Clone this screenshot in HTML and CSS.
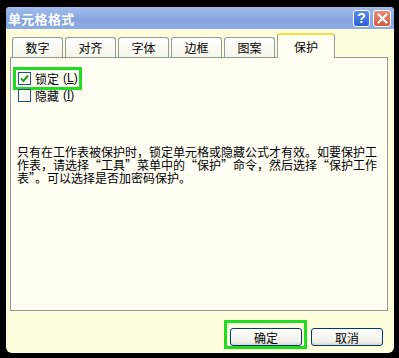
FILE: index.html
```html
<!DOCTYPE html>
<html lang="zh-CN">
<head>
  <meta charset="UTF-8">
  <title>单元格格式</title>
  <link rel="stylesheet" href="styles.css">
</head>
<body>
  <div class="dialog">
    <div class="titlebar">
      <span class="title">单元格格式</span>
      <span class="tb-btn help">?</span>
      <span class="tb-btn close">
        <svg width="11" height="11" viewBox="0 0 11 11"><path d="M1.5 1.5 L9.5 9.5 M9.5 1.5 L1.5 9.5" stroke="#fff" stroke-width="2.2" stroke-linecap="round"/></svg>
      </span>
    </div>
    <div class="content">
      <div class="tabs">
        <span class="tab">数字</span>
        <span class="tab">对齐</span>
        <span class="tab">字体</span>
        <span class="tab">边框</span>
        <span class="tab">图案</span>
        <span class="tab active">保护</span>
      </div>
      <div class="panel">
        <div class="highlight">
          <label class="check"><span class="box checked"><svg width="9" height="9" viewBox="0 0 9 9"><path d="M1 4.5 L3.5 7 L8 1.5" fill="none" stroke="#21a121" stroke-width="2"/></svg></span>锁定 <span class="key">(<u>L</u>)</span></label>
        </div>
        <label class="check plain"><span class="box"></span>隐藏 <span class="key">(<u>I</u>)</span></label>
        <p class="note">只有在工作表被保护时，锁定单元格或隐藏公式才有效。如要保护工作表，请选择“工具”菜单中的“保护”命令，然后选择“保护工作表”。可以选择是否加密码保护。</p>
      </div>
      <div class="buttons">
        <span class="btn-wrap"><button class="btn">确定</button></span>
        <button class="btn">取消</button>
      </div>
    </div>
  </div>
</body>
</html>
```

FILE: styles.css
```css
body {
  margin: 0;
  background: #000;
  font-family: "Noto Sans CJK SC", "Liberation Sans", sans-serif;
  font-size: 12px;
  color: #000;
}
.dialog {
  width: 388px;
  height: 346px;
  margin: 7px 0 0 6px;
  background: #fefedd;
  border-radius: 4px 4px 6px 6px;
  overflow: hidden;
  display: flex;
  flex-direction: column;
}
.titlebar {
  height: 22px;
  background: linear-gradient(#a2bbec, #85a5e0 60%, #8eabe2);
  display: flex;
  align-items: center;
  padding: 0 3px 0 2px;
  gap: 3px;
}
.title {
  flex: 1;
  color: #fff;
  font-weight: bold;
  font-size: 13px;
  letter-spacing: 0.3px;
}
.tb-btn {
  width: 17px;
  height: 17px;
  border: 1px solid #fff;
  border-radius: 3px;
  display: flex;
  align-items: center;
  justify-content: center;
  box-sizing: border-box;
}
.help {
  background: linear-gradient(#5b8be6, #2a5fd6);
  color: #fff;
  font-family: "Liberation Sans", sans-serif;
  font-weight: bold;
  font-size: 14px;
}
.close {
  background: linear-gradient(#e88c78, #d25a40);
  width: 18px;
}
.content {
  flex: 1;
  padding: 4px 6px 0 4px;
}
.tabs {
  display: flex;
  align-items: flex-end;
  height: 24px;
  padding-left: 2px;
  gap: 2px;
}
.tab {
  width: 49px;
  height: 19px;
  border: 1px solid #919b9c;
  border-bottom: none;
  border-radius: 3px 3px 0 0;
  background: linear-gradient(#fefefe, #f6f6ea);
  display: flex;
  align-items: center;
  justify-content: center;
  font-size: 12px;
}
.tab.active {
  width: 56px;
  height: 23px;
  background: #fffff4;
  border-top: 2px solid #f8dc4a;
  position: relative;
  top: 1px;
  z-index: 1;
}
.panel {
  height: 254px;
  border: 1px solid #919b9c;
  background: #fffff4;
  padding: 9px 0 0 2px;
  box-sizing: border-box;
}
.highlight {
  display: inline-flex;
  height: 17px;
  border: 3px solid #21dd21;
  padding-right: 1px;
  align-items: center;
}
.check {
  display: flex;
  align-items: center;
  gap: 4px;
  font-size: 12px;
  line-height: 13px;
  padding-left: 2px;
  white-space: nowrap;
}
.key {
  font-family: "Liberation Sans", sans-serif;
  font-size: 12px;
  margin-left: 0;
}
.check.plain {
  padding-left: 5px;
  margin-top: -1px;
}
.box {
  width: 11px;
  height: 11px;
  border: 1px solid #1c5180;
  background: #fbfbf4;
  display: flex;
  align-items: center;
  justify-content: center;
}
.note {
  margin: 43px 8px 0 4px;
  line-height: 13px;
  font-size: 12px;
}
.buttons {
  display: flex;
  justify-content: flex-end;
  align-items: flex-end;
  gap: 4px;
  margin-top: 9px;
  padding-right: 5px;
}
.btn-wrap {
  display: flex;
  border: 3px solid #21dd21;
  padding: 5px 2px 0 3px;
}
.btn {
  width: 72px;
  height: 18px;
  border: 1px solid #003c74;
  border-radius: 3px;
  background: linear-gradient(#fff, #f1f1ea 80%, #d8d6c8);
  font-family: "Noto Sans CJK SC", sans-serif;
  font-size: 12px;
  padding: 0;
  line-height: 15px;
}
.buttons > .btn {
  margin-bottom: 3px;
}
```
